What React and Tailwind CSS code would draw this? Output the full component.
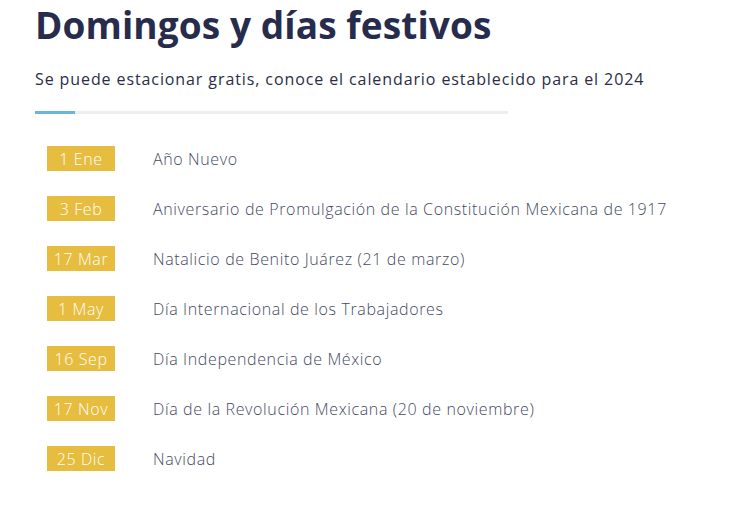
import React from 'react';

const fechas = [
  { dia: '1 Ene', nombre: 'Año Nuevo' },
  { dia: '3 Feb', nombre: 'Aniversario de Promulgación de la Constitución Mexicana de 1917' },
  { dia: '17 Mar', nombre: 'Natalicio de Benito Juárez (21 de marzo)' },
  { dia: '1 May', nombre: 'Día Internacional de los Trabajadores' },
  { dia: '16 Sep', nombre: 'Día Independencia de México' },
  { dia: '17 Nov', nombre: 'Día de la Revolución Mexicana (20 de noviembre)' },
  { dia: '25 Dic', nombre: 'Navidad' },
];

export default function App() {
  return (
    <div className="bg-white min-h-[522px] pl-[35px] pt-[3px] font-['Open_Sans',sans-serif]">
      <h1 className="text-[37px] leading-[44px] font-bold text-[#272c4d] tracking-[0.1px]">
        Domingos y días festivos
      </h1>
      <p className="mt-[20px] text-[16px] leading-[24px] text-[#2a2e45] tracking-[0.9px]">
        Se puede estacionar gratis, conoce el calendario establecido para el 2024
      </p>
      <div className="mt-[20px] flex w-[473px] h-[3px] bg-[#eeeeee]">
        <div className="w-[40px] h-full bg-[#6db4db]" />
      </div>
      <ul className="mt-[32px] pl-[12px] flex flex-col gap-[25px]">
        {fechas.map((f) => (
          <li key={f.dia} className="flex items-center h-[25px]">
            <span className="w-[68px] h-[25px] flex items-center justify-center bg-[#e6bd3f] text-white text-[16px] font-light tracking-[0.6px]">
              {f.dia}
            </span>
            <span className="ml-[38px] text-[16px] font-light text-[#454a62] tracking-[0.63px]">
              {f.nombre}
            </span>
          </li>
        ))}
      </ul>
    </div>
  );
}
